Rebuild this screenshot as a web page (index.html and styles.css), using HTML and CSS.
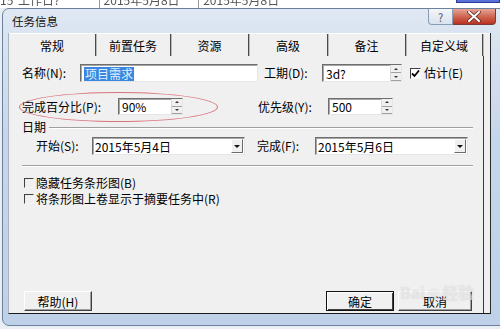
FILE: index.html
```html
<!DOCTYPE html>
<html lang="zh-CN">
<head>
    <meta charset="UTF-8">
    <title>任务信息</title>
    <link rel="stylesheet" href="styles.css">
</head>
<body>
    <!-- 背后的表格行（只露出一点） -->
    <div class="sheet">
        <span class="c1">15</span>
        <span class="c2">工作日?</span>
        <span class="c3">2015年5月8日</span>
        <span class="c4">2015年5月8日</span>
        <span class="sel"></span>
    </div>

    <div class="window">
        <div class="titlebar">
            <span class="title">任务信息</span>
            <div class="ctrls">
                <span class="help">?</span>
                <span class="close">
                    <svg width="14" height="11" viewBox="0 0 14 11">
                        <path d="M2 1 L12 10 M12 1 L2 10" stroke="#5a2a24" stroke-width="3.6" stroke-linecap="round"/>
                        <path d="M2 1 L12 10 M12 1 L2 10" stroke="#fff" stroke-width="2" stroke-linecap="round"/>
                    </svg>
                </span>
            </div>
        </div>

        <div class="client">
            <div class="tabs">
                <div class="tab active t1">常规</div>
                <div class="tab t2">前置任务</div>
                <div class="tab t3">资源</div>
                <div class="tab t4">高级</div>
                <div class="tab t5">备注</div>
                <div class="tab t6">自定义域</div>
            </div>

            <div class="panel">
                <div class="row r1">
                    <label class="lb w58">名称(N):</label>
                    <div class="field name"><span class="hl">项目需求</span></div>
                    <label class="lb w58 ml6">工期(D):</label>
                    <div class="field spinner w80">3d?<span class="spin"><i class="up"></i><i class="down"></i></span></div>
                    <span class="chk checked">
                        <svg width="9" height="9" viewBox="0 0 9 9"><path d="M1 4.5 L3.5 7 L8 1.5" fill="none" stroke="#000" stroke-width="1.8"/></svg>
                    </span>
                    <label class="lb ml3">估计(E)</label>
                </div>

                <div class="row r2">
                    <label class="lb w96">完成百分比(P):</label>
                    <div class="field spinner w65">90%<span class="spin"><i class="up"></i><i class="down"></i></span></div>
                    <label class="lb w70 ml75">优先级(Y):</label>
                    <div class="field spinner w65">500<span class="spin"><i class="up"></i><i class="down"></i></span></div>
                </div>

                <div class="group">
                    <span>日期</span>
                    <span class="line"></span>
                </div>

                <div class="row r3">
                    <label class="lb w56">开始(S):</label>
                    <div class="field combo">2015年5月4日<span class="drop"><i></i></span></div>
                    <label class="lb w58 ml12">完成(F):</label>
                    <div class="field combo">2015年5月6日<span class="drop"><i></i></span></div>
                </div>

                <div class="sep"></div>

                <div class="check c-a"><span class="chk"></span><span>隐藏任务条形图(B)</span></div>
                <div class="check c-b"><span class="chk"></span><span>将条形图上卷显示于摘要任务中(R)</span></div>

                <div class="footer">
                    <button class="btn help-btn">帮助(H)</button>
                    <button class="btn ok">确定</button>
                    <button class="btn cancel">取消</button>
                </div>

                <div class="ring"></div>
                <div class="mark">Bai<span class="paw">❀</span>经验</div>
            </div>
        </div>
    </div>
</body>
</html>
```

FILE: styles.css
```css
* {
    margin: 0;
    padding: 0;
    box-sizing: border-box;
}
html, body {
    width: 500px;
    height: 329px;
    overflow: hidden;
}
body {
    background-color: #e9eef4;
    font-family: "Noto Sans CJK SC", "Liberation Sans", sans-serif;
    font-size: 12px;
    color: #000;
}

/* 背景表格 */
.sheet {
    height: 8px;
    background-color: #fff;
    overflow: hidden;
    display: flex;
    color: #555;
    line-height: 12px;
    filter: blur(0.5px);
}
.sheet span {
    margin-top: -6px;
}
.c1 { width: 18px; }
.c2 { width: 82px; border-right: 1px solid #999; }
.c3 { width: 100px; padding-left: 4px; border-right: 1px solid #999; }
.c4 { width: 258px; padding-left: 4px; }
.sel {
    width: 44px;
    height: 9px;
    background-color: #5b6fd6;
    border: 1px solid #2a3a9a;
}

/* 窗口 */
.window {
    width: 510px;
    height: 318px;
    margin-left: 2px;
    padding-left: 5px;
    border: 1px solid #6b819e;
    border-radius: 7px 7px 0 7px;
    background: linear-gradient(#dfe8f3, #c6d6ea 40%, #bfd1e8);
}
.titlebar {
    height: 24px;
    display: flex;
    align-items: flex-start;
}
.title {
    align-self: center;
    padding-left: 4px;
    font-size: 11.5px;
    color: #111;
}
.ctrls {
    margin-left: auto;
    margin-right: 15px;
    display: flex;
}
.help, .close {
    height: 16px;
    display: flex;
    align-items: center;
    justify-content: center;
}
.help {
    width: 25px;
    border: 1px solid #8a9cb3;
    border-top: none;
    border-radius: 0 0 0 4px;
    background: linear-gradient(#f3f6fa, #d9e2ee);
    color: #555;
    font-size: 11px;
}
.close {
    width: 43px;
    border: 1px solid #7a3b35;
    border-top: none;
    border-left: none;
    border-radius: 0 0 4px 0;
    background: linear-gradient(#e8a597, #cf6752 50%, #b8321f);
}

/* 客户区 */
.client {
    width: 483px;
    height: 281px;
    background-color: #f0f0f0;
    border-left: 1px solid #a9b3bf;
    border-right: 1px solid #2a2a2a;
    border-bottom: 1px solid #1a1a1a;
    display: flex;
    flex-direction: column;
}
.tabs {
    height: 23px;
    display: flex;
    border-top: 1px solid #fff;
}
.tab {
    height: 22px;
    line-height: 24px;
    text-align: center;
    font-size: 12px;
    border-right: 1px solid #4a4a4a;
    box-shadow: 1px 0 0 #b9b9b9;
}
.t1 { width: 87px; }
.t2 { width: 75px; }
.t3 { width: 78px; }
.t4 { width: 79px; }
.t5 { width: 78px; }
.t6 { width: 77px; }

.panel {
    position: relative;
    width: 475px;
    flex: 1;
    padding-left: 13px;
    border-right: 1px solid #3a3a3a;
    display: flex;
    flex-direction: column;
}

.row {
    display: flex;
    align-items: center;
}
.r1 { margin-top: 8px; height: 18px; }
.r2 { margin-top: 16px; height: 17px; }
.r3 { margin-top: 4px; height: 18px; padding-left: 14px; }

.lb { white-space: nowrap; line-height: 14px; }
.w56 { width: 56px; }
.w58 { width: 58px; }
.w70 { width: 70px; }
.w96 { width: 96px; }
.ml3 { margin-left: 3px; }
.ml6 { margin-left: 6px; }
.ml12 { margin-left: 12px; }
.ml75 { margin-left: 75px; }

.field {
    position: relative;
    height: 100%;
    background-color: #fff;
    border-top: 1px solid #6e6e6e;
    border-left: 1px solid #6e6e6e;
    border-right: 1px solid #e6e6e6;
    border-bottom: 1px solid #e6e6e6;
    box-shadow: inset 1px 1px 0 #a6a6a6;
    padding-left: 3px;
    line-height: 15px;
    white-space: nowrap;
}
.name { width: 178px; padding-top: 1px; }
.hl {
    display: inline-block;
    background-color: #3a86e0;
    color: #dfefff;
    line-height: 14px;
    padding: 0 1px;
}
.w80 { width: 80px; }
.w65 { width: 65px; }
.spinner { display: flex; align-items: center; }
.spin {
    margin-left: auto;
    width: 11px;
    height: 100%;
    display: flex;
    flex-direction: column;
    border-left: 1px solid #d8d8d8;
    background-color: #f0f0f0;
}
.spin i {
    flex: 1;
    display: flex;
    align-items: center;
    justify-content: center;
    border-bottom: 1px solid #a0a0a0;
}
.spin i::after {
    content: "";
    border-left: 2px solid transparent;
    border-right: 2px solid transparent;
}
.spin .up::after { border-bottom: 2px solid #333; }
.spin .down::after { border-top: 2px solid #333; }

.combo {
    width: 153px;
    display: flex;
    align-items: center;
    padding-left: 2px;
}
.drop {
    margin-left: auto;
    margin-right: 1px;
    width: 12px;
    height: 14px;
    background-color: #f0f0f0;
    border-top: 1px solid #fff;
    border-left: 1px solid #fff;
    border-right: 1px solid #6a6a6a;
    border-bottom: 1px solid #6a6a6a;
    display: flex;
    align-items: center;
    justify-content: center;
}
.drop i {
    border-left: 3px solid transparent;
    border-right: 3px solid transparent;
    border-top: 3px solid #111;
}

.chk {
    width: 11px;
    height: 11px;
    margin-left: 8px;
    border-top: 1px solid #404040;
    border-left: 1px solid #404040;
    border-right: 1px solid #f6f6f6;
    border-bottom: 1px solid #f6f6f6;
    display: flex;
    align-items: center;
    justify-content: center;
}
.chk.checked { background-color: #fff; }

.group {
    margin-top: 6px;
    height: 12px;
    display: flex;
    align-items: center;
    line-height: 12px;
    margin-right: 10px;
}
.line {
    flex: 1;
    margin-left: 3px;
    margin-top: 2px;
    border-top: 1px solid #a0a0a0;
    border-bottom: 1px solid #fff;
}
.sep {
    margin-top: 10px;
    margin-right: 10px;
    border-top: 1px solid #a0a0a0;
    border-bottom: 1px solid #fff;
}

.check {
    height: 14px;
    display: flex;
    align-items: center;
    line-height: 14px;
}
.check .chk {
    width: 10px;
    height: 10px;
    margin-left: 2px;
    margin-right: 2px;
}
.c-a { margin-top: 9px; }
.c-b { margin-top: 2px; }

.footer {
    margin-top: auto;
    padding-bottom: 2px;
    padding-left: 2px;
    display: flex;
}
.btn {
    height: 20px;
    font-family: inherit;
    font-size: 12px;
    background-color: #f0f0f0;
    border-top: 1px solid #fff;
    border-left: 1px solid #fff;
    border-right: 1px solid #404040;
    border-bottom: 1px solid #404040;
    box-shadow: inset -1px -1px 0 #a0a0a0;
}
.help-btn { width: 68px; }
.ok {
    width: 68px;
    margin-left: 234px;
    border: 1px solid #111;
    box-shadow: inset 1px 1px 0 #fff, inset -1px -1px 0 #404040;
}
.cancel {
    width: 74px;
    margin-left: 4px;
}

/* 标注的红圈 */
.ring {
    position: absolute;
    left: 10px;
    top: 36px;
    width: 199px;
    height: 30px;
    border: 1px solid #d8747d;
    border-radius: 50%;
}

/* 水印 */
.mark {
    position: absolute;
    left: 391px;
    top: 224px;
    font-size: 16px;
    font-weight: bold;
    color: rgba(255, 255, 255, 0.55);
    text-shadow: 0 0 1px rgba(120, 120, 120, 0.35);
}
.paw {
    font-size: 13px;
    margin: 0 2px;
}
```
